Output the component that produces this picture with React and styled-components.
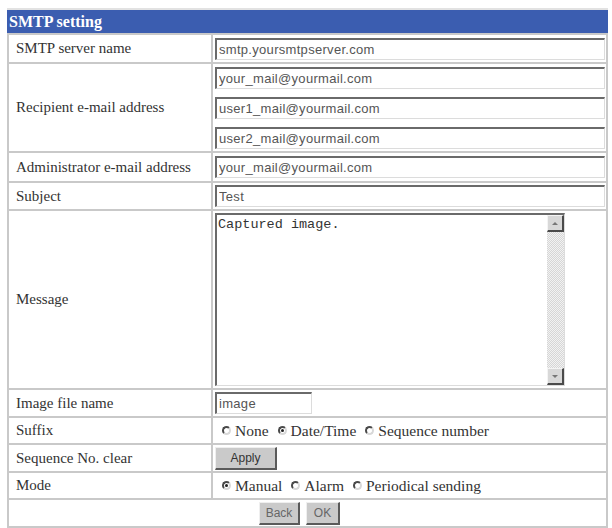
import styled, { createGlobalStyle } from 'styled-components';

const GlobalStyle = createGlobalStyle`
  body {
    margin: 0;
    background: #fff;
  }
`;

const Page = styled.div`
  width: 601px;
  padding: 8px 0 0 7px;
  font-family: 'Liberation Serif', 'Times New Roman', serif;
  color: #2a2a2a;
`;

const Title = styled.div`
  height: 23px;
  border-top: 2px solid #e2e2e2;
  background: #3b5db0;
  color: #fff;
  font-weight: 700;
  font-size: 16px;
  line-height: 23px;
  padding-left: 2px;
`;

const Form = styled.div`
  display: grid;
  grid-template-columns: 202px 1fr;
  grid-template-rows: 27px 87px 28px 26px 177px 26px 25px 26px 25px 26px;
  gap: 2px;
  padding: 2px;
  background: #c9c9c9;
`;

const Label = styled.div`
  background: #fff;
  display: flex;
  align-items: center;
  padding-left: 7px;
  font-size: 15px;
  color: #333;
  white-space: nowrap;
`;

const Value = styled.div`
  background: #fff;
  display: flex;
  flex-direction: ${p => (p.$stack ? 'column' : 'row')};
  justify-content: ${p => (p.$stack ? 'center' : 'flex-start')};
  align-items: ${p => (p.$stack ? 'flex-start' : 'center')};
  gap: ${p => p.$gap || '0'};
  padding-left: 2px;
  font-size: 15.5px;
  color: #333;
`;

const Footer = styled.div`
  grid-column: 1 / -1;
  background: #fff;
  display: flex;
  justify-content: center;
  align-items: center;
  gap: 6px;
  padding-right: 16px;
`;

const TextBox = styled.input`
  box-sizing: border-box;
  width: ${p => p.$width || '390px'};
  height: 22px;
  margin: 0;
  padding: 0 0 0 2px;
  border-style: solid;
  border-width: 2px 1px 1px 2px;
  border-color: #6a6a6a #dcdcdc #dcdcdc #6a6a6a;
  background: #fff;
  font-family: 'Liberation Sans', Arial, sans-serif;
  font-size: 13px;
  letter-spacing: 0.3px;
  color: #555;
  outline: none;
`;

const MemoBox = styled.div`
  box-sizing: border-box;
  width: 350px;
  height: 173px;
  display: flex;
  border-style: solid;
  border-width: 2px 1px 1px 2px;
  border-color: #6a6a6a #dcdcdc #dcdcdc #6a6a6a;
  background: #fff;
`;

const Memo = styled.textarea`
  flex: 1;
  border: none;
  margin: 0;
  padding: 2px 1px;
  resize: none;
  overflow: hidden;
  font-family: 'Liberation Mono', 'Courier New', monospace;
  font-size: 13.5px;
  color: #333;
  outline: none;
`;

const ScrollTrack = styled.div`
  width: 17px;
  display: flex;
  flex-direction: column;
  justify-content: space-between;
  background: repeating-conic-gradient(#d6d6d6 0 25%, #f2f2f2 0 50%) 0 0 / 2px 2px;
`;

const ScrollButton = styled.div`
  box-sizing: border-box;
  width: 17px;
  height: 17px;
  display: flex;
  align-items: center;
  justify-content: center;
  background: #d8d8d8;
  border-style: solid;
  border-width: 1px 2px 2px 1px;
  border-color: #f4f4f4 #4a4a4a #4a4a4a #f4f4f4;

  &::after {
    content: '';
    border-left: 3px solid transparent;
    border-right: 3px solid transparent;
    border-${p => (p.$down ? 'top' : 'bottom')}: 3px solid #777;
  }
`;

const Choice = styled.label`
  display: flex;
  align-items: center;
  gap: 4px;
  margin-right: 2px;
  white-space: nowrap;
`;

const Radio = styled.span`
  box-sizing: border-box;
  width: 9px;
  height: 9px;
  margin-left: 7px;
  border-radius: 50%;
  border: 2px solid;
  border-color: #4a4a4a #d8d8d8 #d8d8d8 #4a4a4a;
  display: flex;
  align-items: center;
  justify-content: center;

  &::after {
    content: '';
    width: 3px;
    height: 3px;
    border-radius: 50%;
    background: ${p => (p.$on ? '#222' : 'transparent')};
  }
`;

const Button = styled.button`
  box-sizing: border-box;
  width: ${p => p.$width};
  height: 23px;
  margin: 0;
  padding: 0;
  background: #cacaca;
  border-style: solid;
  border-width: 1px 2px 2px 1px;
  border-color: #efefef #5a5a5a #5a5a5a #efefef;
  font-family: 'Liberation Sans', Arial, sans-serif;
  font-size: 12px;
  color: ${p => (p.$muted ? '#666' : '#333')};
`;

function RadioGroup({ options, selected }) {
  return options.map(opt => (
    <Choice key={opt}>
      <Radio $on={opt === selected} />
      {opt}
    </Choice>
  ));
}

export default function App() {
  return (
    <Page>
      <GlobalStyle />
      <Title>SMTP setting</Title>
      <Form>
        <Label>SMTP server name</Label>
        <Value>
          <TextBox defaultValue="smtp.yoursmtpserver.com" />
        </Value>

        <Label>Recipient e-mail address</Label>
        <Value $stack $gap="8px">
          <TextBox defaultValue="your_mail@yourmail.com" />
          <TextBox defaultValue="user1_mail@yourmail.com" />
          <TextBox defaultValue="user2_mail@yourmail.com" />
        </Value>

        <Label>Administrator e-mail address</Label>
        <Value>
          <TextBox defaultValue="your_mail@yourmail.com" />
        </Value>

        <Label>Subject</Label>
        <Value>
          <TextBox defaultValue="Test" />
        </Value>

        <Label>Message</Label>
        <Value>
          <MemoBox>
            <Memo defaultValue="Captured image." />
            <ScrollTrack>
              <ScrollButton />
              <ScrollButton $down />
            </ScrollTrack>
          </MemoBox>
        </Value>

        <Label>Image file name</Label>
        <Value>
          <TextBox $width="97px" defaultValue="image" />
        </Value>

        <Label>Suffix</Label>
        <Value>
          <RadioGroup
            options={['None', 'Date/Time', 'Sequence number']}
            selected="Date/Time"
          />
        </Value>

        <Label>Sequence No. clear</Label>
        <Value>
          <Button $width="62px">Apply</Button>
        </Value>

        <Label>Mode</Label>
        <Value>
          <RadioGroup
            options={['Manual', 'Alarm', 'Periodical sending']}
            selected="Manual"
          />
        </Value>

        <Footer>
          <Button $width="41px" $muted>Back</Button>
          <Button $width="34px" $muted>OK</Button>
        </Footer>
      </Form>
    </Page>
  );
}
